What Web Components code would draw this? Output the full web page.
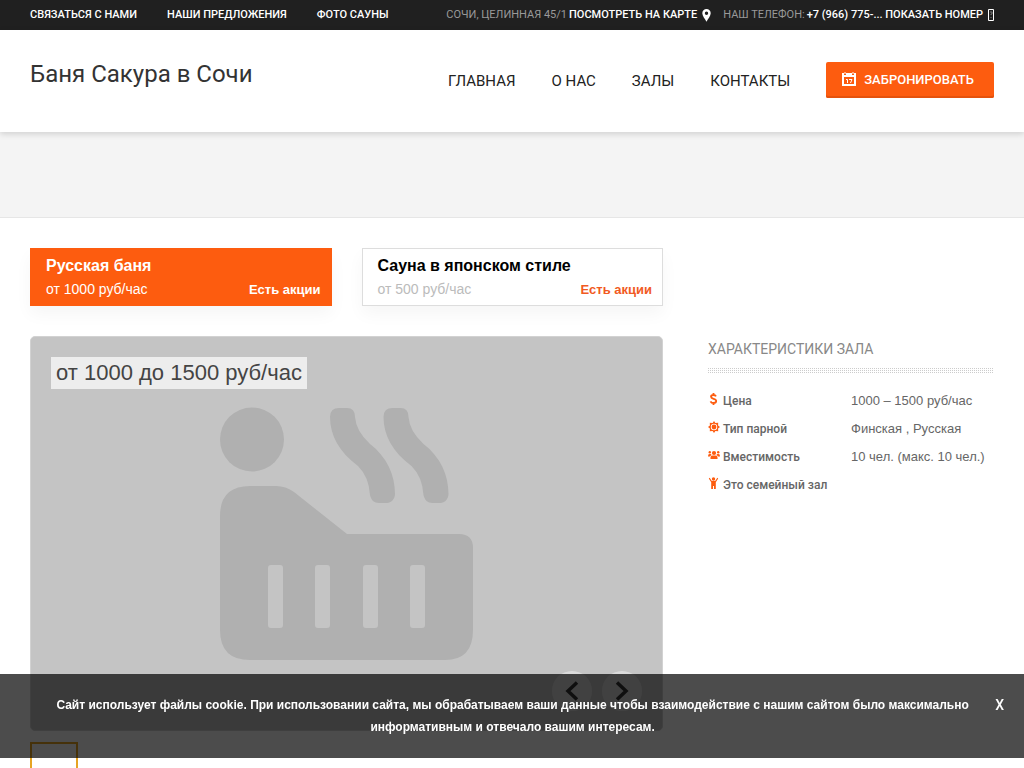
<!DOCTYPE html>
<html lang="ru">
<head>
<meta charset="utf-8">
<meta name="viewport" content="width=device-width, initial-scale=1">
<title>Баня Сакура в Сочи</title>
<style>
html { scrollbar-width: none; }
body { margin: 0; background: #fff; font-family: Roboto, "Liberation Sans", sans-serif; color: #333; }
</style>
</head>
<body>
<sauna-page></sauna-page>
<script>
function define(name, html) {
  const template = document.createElement('template');
  template.innerHTML = html;
  customElements.define(name, class extends HTMLElement {
    constructor() {
      super();
      this.attachShadow({ mode: 'open' }).append(template.content.cloneNode(true));
    }
  });
}

define('top-bar', `
<style>
:host { display: flex; justify-content: space-between; align-items: center; height: 30px; padding: 0 30px; background: #202020; color: #999; font-size: 11px; line-height: 30px; white-space: nowrap; }
nav, div { display: flex; }
nav { gap: 30px; }
div { gap: 12px; }
a { color: #fff; font-weight: 500; text-decoration: none; }
span { display: flex; align-items: center; gap: 2px; }
svg { display: block; margin-left: 3px; }
</style>
<nav><a href="#contact">СВЯЗАТЬСЯ С НАМИ</a><a href="#offers">НАШИ ПРЕДЛОЖЕНИЯ</a><a href="#photo">ФОТО САУНЫ</a></nav>
<div>
<span>СОЧИ, ЦЕЛИННАЯ 45/1 <a href="#map">ПОСМОТРЕТЬ НА КАРТЕ</a>
<svg width="9" height="13" viewBox="0 0 9 13"><path fill="#fff" fill-rule="evenodd" d="M4.500 0a4.200 4.200 0 0 0-4.200 4.300C.3 7 3 10 4.500 12.800 6 10 8.700 7 8.700 4.300A4.200 4.200 0 0 0 4.500 0zm0 2.600a1.700 1.700 0 1 1 0 3.400 1.700 1.700 0 0 1 0-3.400z"/></svg></span>
<span>НАШ ТЕЛЕФОН: <a href="#phone">+7 (966) 775-... ПОКАЗАТЬ НОМЕР</a>
<svg width="6" height="12" viewBox="0 0 6 12"><path fill="none" stroke="#fff" d="M.5.5h5v11h-5z"/><path stroke="#777" fill="none" d="M2 3h2v2H3v1M3 8v1"/></svg></span>
</div>`);

define('site-header', `
<style>
:host { display: flex; justify-content: space-between; align-items: flex-start; height: 102px; padding: 0 30px; background: #fff; box-shadow: 0 2px 6px rgba(0,0,0,.15); position: relative; box-sizing: border-box; }
h1 { margin: 28px 0 0; font-size: 24px; line-height: 32px; font-weight: 400; color: #333; }
nav { display: flex; gap: 36px; margin-top: 32px; line-height: 38px; font-size: 15px; font-weight: 400; white-space: nowrap; }
a { color: #222; text-decoration: none; }
button { display: flex; align-items: center; gap: 8px; height: 36px; padding: 0 20px 0 16px; border: 0; border-radius: 2px; box-shadow: inset 0 -2px #e4520d; background: #fd5c0f; color: #fff; font: 500 13px/36px Roboto, sans-serif; }
svg { margin-bottom: 2px; }
</style>
<h1>Баня Сакура в Сочи</h1>
<nav><a href="#home">ГЛАВНАЯ</a><a href="#about">О НАС</a><a href="#halls">ЗАЛЫ</a><a href="#contacts">КОНТАКТЫ</a>
<button type="button"><svg width="14" height="14" viewBox="0 0 14 14"><path fill="#fff" fill-rule="evenodd" d="M0 1h2v2h2V1h6v2h2V1h2v13H0zM2 5v7h10V5z"/><path fill="#fff" d="M2.500 0h1v2h-1zM10.500 0h1v2h-1z"/><path fill="none" stroke="#fff" d="M4 7.500h1.500V11M7 7.500h3L8.500 11"/></svg>ЗАБРОНИРОВАТЬ</button></nav>`);

define('hall-card', `
<style>
:host { display: block; box-sizing: border-box; height: 58px; border: 1px solid #ddd; box-shadow: 0 8px 16px rgba(0,0,0,.04); background: #fff; padding: 5px 10px 0 15px; font-family: "Liberation Sans", Arial, sans-serif; color: #000; --price: #bbb; --promo: #f15a22; }
:host([active]) { background: #fd5c0f; border-color: #fd5c0f; color: #fff; --price: #fff; --promo: #fff; }
a { color: inherit; text-decoration: none; }
h2 { margin: 0; font-size: 16px; line-height: 24px; font-weight: 700; }
p { display: flex; justify-content: space-between; margin: 0; font-size: 14px; line-height: 22px; color: var(--price); }
b { font-size: 13px; line-height: 24px; color: var(--promo); }
</style>
<a href="#hall"><h2><slot name="title"></slot></h2><p><slot name="price"></slot><b>Есть акции</b></p></a>`);

define('photo-gallery', `
<style>
:host { display: block; }
figure { position: relative; display: flex; box-sizing: border-box; height: 395px; margin: 0; border: 1px solid #d2d2d2; border-radius: 5px; background: #c4c4c4; justify-content: center; padding-top: 70px; }
figcaption { position: absolute; left: 20px; top: 20px; padding: 0 5px; background: rgba(255,255,255,.7); font: 22px/32px "Liberation Sans", Arial, sans-serif; color: #444; }
div { position: absolute; right: 20px; bottom: 19px; display: flex; gap: 10px; }
button { width: 40px; height: 40px; padding: 0; border: 0; border-radius: 50%; background: rgba(255,255,255,.4); display: grid; place-items: center; }
i { display: block; box-sizing: border-box; width: 48px; height: 48px; margin-top: 11px; border: 2px solid #e6a423; }
</style>
<figure>
<svg width="254" height="254" viewBox="0 0 254 254"><g fill="#b0b0b0"><circle cx="32" cy="32.500" r="32"/><path fill-rule="evenodd" d="M30 79h26q10 0 18 6l53 42h112q14 0 14 14v82q0 30-28 30H30q-30 0-30-30V109Q0 79 30 79zM51 158q-3 0-3 3v57q0 3 3 3h9q3 0 3-3v-57q0-3-3-3zm47 0q-3 0-3 3v57q0 3 3 3h9q3 0 3-3v-57q0-3-3-3zm48 0q-3 0-3 3v57q0 3 3 3h9q3 0 3-3v-57q0-3-3-3zm47 0q-3 0-3 3v57q0 3 3 3h9q3 0 3-3v-57q0-3-3-3z"/><path d="M119 1h8q8 0 8 9 1 14 15 27c17 13 25 31 25 50 0 5-4 9-8 9h-8c-5 0-8-3-9-8q-1-18-12-29C119 45 110 28 110 10q0-9 9-9z"/><path transform="translate(53.500 0)" d="M119 1h8q8 0 8 9 1 14 15 27c17 13 25 31 25 50 0 5-4 9-8 9h-8c-5 0-8-3-9-8q-1-18-12-29C119 45 110 28 110 10q0-9 9-9z"/></g></svg>
<figcaption>от 1000 до 1500 руб/час</figcaption>
<div><button type="button" aria-label="Назад"><svg width="14" height="20" viewBox="0 0 14 20"><path fill="none" stroke="#333" stroke-width="3.500" d="M12 1.500 3 10l9 8.500"/></svg></button><button type="button" aria-label="Вперёд"><svg width="14" height="20" viewBox="0 0 14 20"><path fill="none" stroke="#333" stroke-width="3.500" d="M2 1.500 11 10l-9 8.500"/></svg></button></div>
</figure><i></i>`);

define('hall-features', `
<style>
:host { display: block; color: #666; }
h3 { margin: 0; padding-bottom: 6px; font-size: 14px; line-height: 26px; font-weight: 400; color: #888; }
hr { height: 5px; margin: 0 0 14px; border: 0; background: conic-gradient(from 270deg, #ccc 25%, #fff 0) 0 0 / 2px 2px; }
table { width: 100%; border-collapse: collapse; table-layout: fixed; }
th, td { padding: 0; height: 28px; line-height: 28px; text-align: left; white-space: nowrap; }
th { width: 143px; font-size: 12px; font-weight: 500; }
td { font: 13px/28px "Liberation Sans", Arial, sans-serif; }
span { display: flex; align-items: center; gap: 3px; height: 28px; }
svg { fill: #fd5c0f; display: block; margin-bottom: 4px; }
</style>
<h3>ХАРАКТЕРИСТИКИ ЗАЛА</h3><hr>
<table>
<tr><th scope="row"><span><svg width="12" height="12" viewBox="0 0 12 12"><path fill="none" stroke="#fd5c0f" stroke-width="1.800" d="M8 3.400C7.500 2.300 6.500 2 5.500 2 4 2 3 2.700 3 3.800 3 6.400 8.200 5.300 8.200 8 8.200 9.300 7 10 5.500 10 4 10 3 9.400 2.500 8.300M5.500 0v2M5.500 10v2"/></svg>Цена</span></th><td>1000 – 1500 руб/час</td></tr>
<tr><th scope="row"><span><svg width="12" height="12" viewBox="0 0 12 12"><path fill-rule="evenodd" d="M6 0 7.400 1.900 10.200 1.800 10.100 4.600 12 6 10.100 7.400 10.200 10.200 7.400 10.100 6 12 4.600 10.100 1.800 10.200 1.900 7.400 0 6 1.900 4.600 1.800 1.800 4.600 1.900zM6 2.800a3.200 3.200 0 1 0 0 6.400 3.200 3.200 0 0 0 0-6.400z"/><circle cx="6" cy="6" r="2.400"/></svg>Тип парной</span></th><td>Финская , Русская</td></tr>
<tr><th scope="row"><span><svg width="12" height="12" viewBox="0 0 12 12"><circle cx="6" cy="4" r="2.100"/><circle cx="1.800" cy="3.300" r="1.200"/><circle cx="10.200" cy="3.300" r="1.200"/><path d="M2.500 10V8.600Q2.500 6.500 4.500 6.500h3q2 0 2 2.100V10zM0 7.200Q0 5 1.500 5h1.200l1 1Q2.200 6.500 2 7.500H0zM12 7.200Q12 5 10.500 5H9.300l-1 1q1.500.5 1.700 1.500h2z"/></svg>Вместимость</span></th><td>10 чел. (макс. 10 чел.)</td></tr>
<tr><th scope="row"><span><svg width="12" height="12" viewBox="0 0 12 12"><circle cx="5.500" cy="2" r="1.700"/><path d="m1.700.7 1.900 3q1.900.8 3.800 0l1.900-3 .9.900-2.400 3.600V12H6V9H5v3H3.200V5.200L.8 1.600z"/></svg>Это семейный зал</span></th><td></td></tr>
</table>`);

define('cookie-notice', `
<style>
:host { position: fixed; left: 0; right: 0; bottom: 10px; z-index: 5; display: flex; align-items: flex-start; gap: 20px; box-sizing: border-box; min-height: 84px; padding: 20px 20px 20px 50px; background: rgba(0,0,0,.7); color: #fff; font: 700 12px/22px "Liberation Sans", Arial, sans-serif; }
p { margin: 0; flex: 1; text-align: center; }
button { padding: 0; border: 0; background: none; color: #fff; font: 500 14px/22px Roboto, sans-serif; }
</style>
<p><slot></slot></p><button type="button" aria-label="Закрыть">X</button>`);

define('sauna-page', `
<style>
:host { display: block; }
section { height: 85px; border-bottom: 1px solid #e6e6e6; background: #f4f4f4; }
main { display: grid; grid-template-columns: minmax(0, 1fr) 286px; column-gap: 45px; row-gap: 30px; padding: 30px 30px 0; }
.cards { display: grid; grid-template-columns: 1fr 1fr; gap: 30px; }
photo-gallery { grid-column: 1; grid-row: 2; }
hall-features { grid-column: 2; grid-row: 2; }
</style>
<top-bar></top-bar><site-header></site-header><section></section>
<main>
<div class="cards">
<hall-card active><span slot="title">Русская баня</span><span slot="price">от 1000 руб/час</span></hall-card>
<hall-card><span slot="title">Сауна в японском стиле</span><span slot="price">от 500 руб/час</span></hall-card>
</div>
<photo-gallery></photo-gallery><hall-features></hall-features>
</main>
<cookie-notice>Сайт использует файлы cookie. При использовании сайта, мы обрабатываем ваши данные чтобы взаимодействие с нашим сайтом было максимально информативным и отвечало вашим интересам.</cookie-notice>`);
</script>
</body>
</html>
